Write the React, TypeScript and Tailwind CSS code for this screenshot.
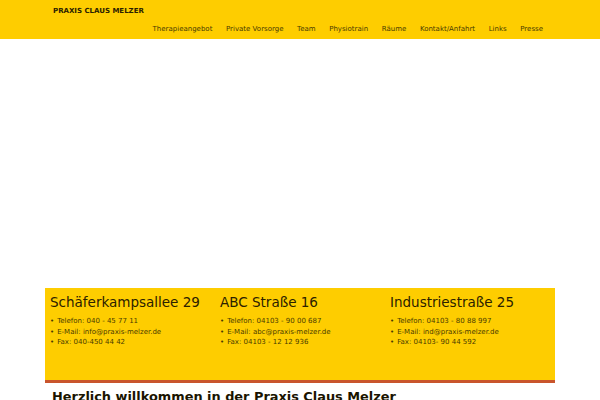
import React from 'react';

const navItems = ['Therapieangebot', 'Private Vorsorge', 'Team', 'Physiotrain', 'Räume', 'Kontakt/Anfahrt', 'Links', 'Presse'];

const locations = [
  {
    name: 'Schäferkampsallee 29',
    lines: ['Telefon: 040 - 45 77 11', 'E-Mail: info@praxis-melzer.de', 'Fax: 040-450 44 42'],
  },
  {
    name: 'ABC Straße 16',
    lines: ['Telefon: 04103 - 90 00 687', 'E-Mail: abc@praxis-melzer.de', 'Fax: 04103 - 12 12 936'],
  },
  {
    name: 'Industriestraße 25',
    lines: ['Telefon: 04103 - 80 88 997', 'E-Mail: ind@praxis-melzer.de', 'Fax: 04103- 90 44 592'],
  },
];

const App: React.FC = () => {
  return (
    <div className="min-h-screen bg-white font-['DejaVu_Sans',sans-serif] text-[#2b2100]">
      <header className="h-[39px] bg-[#fecd00]">
        <div className="mx-auto w-[510px] pl-2 pr-3">
          <div className="pt-[6px] text-[7px] font-bold leading-[10px] text-[#2b2100]">PRAXIS CLAUS MELZER</div>
          <nav className="mt-[8px] flex justify-end gap-[13.6px] text-[7px] leading-[10px] text-[#4a3b00]">
            {navItems.map((item) => (
              <a key={item}>{item}</a>
            ))}
          </nav>
        </div>
      </header>

      <div className="h-[249px]" />

      <div className="mx-auto w-[510px]">
        <section className="grid h-[95px] grid-cols-[170px_170px_165px] border-b-[3px] border-[#c9552c] bg-[#fecd00] pl-[5px] pt-[5px]">
          {locations.map((loc) => (
            <div key={loc.name}>
              <h3 className="whitespace-nowrap text-[13.5px] leading-[18px] text-[#2b2100]">{loc.name}</h3>
              <ul className="mt-[5px] text-[7px] leading-[10.5px] text-[#4a3b00]">
                {loc.lines.map((line) => (
                  <li key={line} className="flex gap-[3px]">
                    <span>•</span>
                    <span>{line}</span>
                  </li>
                ))}
              </ul>
            </div>
          ))}
        </section>
        <h1 className="mt-[6px] whitespace-nowrap px-[7px] text-[12.9px] font-bold leading-[16px] text-[#1a1400]">
          Herzlich willkommen in der Praxis Claus Melzer
        </h1>
      </div>
    </div>
  );
};

export default App;
